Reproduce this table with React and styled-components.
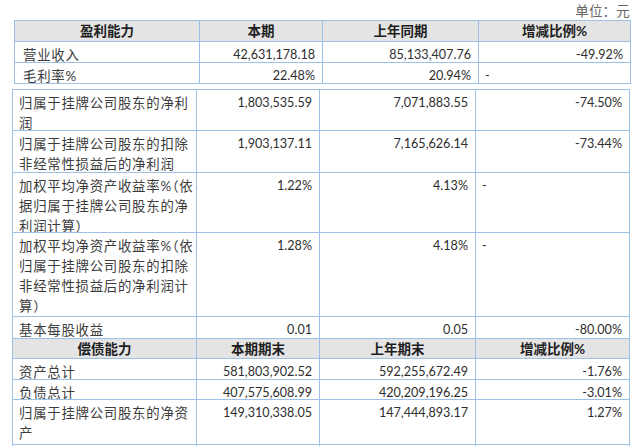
import React from "react";
import styled, { createGlobalStyle } from "styled-components";

const Global = createGlobalStyle`
  html, body { margin: 0; padding: 0; background: #fff; }
  body { font-family: Lato, "Noto Sans CJK SC", sans-serif; color: #333; }
  * { box-sizing: border-box; }
`;

const Page = styled.div`
  width: 636px;
  height: 446px;
  overflow: hidden;
`;

const UnitLine = styled.div`
  height: 20px;
  padding: 3px 6px 0 0;
  text-align: right;
  font-size: 13.5px;
  line-height: 16px;
  color: #666;
  letter-spacing: 0.2px;
`;

const Grid = styled.div`
  display: grid;
  grid-template-columns: ${(p) => p.$cols};
  grid-template-rows: ${(p) => p.$rows};
  margin-left: ${(p) => p.$left}px;
  margin-top: ${(p) => p.$top || 0}px;
  width: max-content;
  border-left: 1px solid #9cc0e6;
  border-top: 1px solid #9cc0e6;
`;

const Cell = styled.div`
  border-right: 1px solid #9cc0e6;
  border-bottom: 1px solid #9cc0e6;
  padding: 3px 7px 0 7px;
  line-height: 20px;
  white-space: nowrap;
  overflow: hidden;
`;

const HeadCell = styled(Cell)`
  background: #e4e4e4;
  padding: 0 4px;
  display: flex;
  align-items: center;
  justify-content: center;
  font-weight: 700;
  font-size: 13.5px;
  color: #1e1e1e;
`;

const LabelCell = styled(Cell)`
  padding-left: ${(p) => p.$pad}px;
  padding-right: 2px;
  font-size: 13.4px;
  letter-spacing: 0.75px;
  color: #3c3c3c;
  font-feature-settings: "halt" 1;
`;

const Line = styled.span`
  display: block;
`;

const NumCell = styled(Cell)`
  text-align: right;
  font-size: 12.6px;
  color: #2e2e2e;
`;

const DashCell = styled(Cell)`
  text-align: left;
  padding-left: 6px;
  font-size: 12.6px;
  color: #2e2e2e;
`;

const table1 = {
  head: ["盈利能力", "本期", "上年同期", "增减比例%"],
  rows: [
    { label: ["营业收入"], v: ["42,631,178.18", "85,133,407.76", "-49.92%"] },
    { label: ["毛利率%"], v: ["22.48%", "20.94%", "-"] },
  ],
};

const table2a = [
  { label: ["归属于挂牌公司股东的净利", "润"], v: ["1,803,535.59", "7,071,883.55", "-74.50%"] },
  { label: ["归属于挂牌公司股东的扣除", "非经常性损益后的净利润"], v: ["1,903,137.11", "7,165,626.14", "-73.44%"] },
  { label: ["加权平均净资产收益率%（依", "据归属于挂牌公司股东的净", "利润计算）"], v: ["1.22%", "4.13%", "-"] },
  { label: ["加权平均净资产收益率%（依", "归属于挂牌公司股东的扣除", "非经常性损益后的净利润计", "算）"], v: ["1.28%", "4.18%", "-"] },
  { label: ["基本每股收益"], v: ["0.01", "0.05", "-80.00%"] },
];

const head2 = ["偿债能力", "本期期末", "上年期末", "增减比例%"];

const table2b = [
  { label: ["资产总计"], v: ["581,803,902.52", "592,255,672.49", "-1.76%"] },
  { label: ["负债总计"], v: ["407,575,608.99", "420,209,196.25", "-3.01%"] },
  { label: ["归属于挂牌公司股东的净资", "产"], v: ["149,310,338.05", "147,444,893.17", "1.27%"] },
  { label: [""], v: ["", "", ""] },
];

function Row({ row, pad }) {
  return (
    <>
      <LabelCell $pad={pad}>
        {row.label.map((l, i) => (
          <Line key={i}>{l || "\u00a0"}</Line>
        ))}
      </LabelCell>
      <NumCell>{row.v[0]}</NumCell>
      <NumCell>{row.v[1]}</NumCell>
      {row.v[2] === "-" ? <DashCell>-</DashCell> : <NumCell>{row.v[2]}</NumCell>}
    </>
  );
}

function Head({ items }) {
  return items.map((h) => <HeadCell key={h}>{h}</HeadCell>);
}

export default function App() {
  return (
    <Page>
      <Global />
      <UnitLine>单位：元</UnitLine>
      <Grid $cols="185px 123px 156px 152px" $rows="21px 21px 21px" $left={14}>
        <Head items={table1.head} />
        {table1.rows.map((r, i) => (
          <Row key={i} row={r} pad={8} />
        ))}
      </Grid>
      <Grid
        $cols="184px 123px 156px 154px"
        $rows="41px 42px 60px 84px 22px 20px 21px 20px 45px 21px"
        $left={12}
        $top={5}
      >
        {table2a.map((r, i) => (
          <Row key={"a" + i} row={r} pad={6} />
        ))}
        <Head items={head2} />
        {table2b.map((r, i) => (
          <Row key={"b" + i} row={r} pad={6} />
        ))}
      </Grid>
    </Page>
  );
}
